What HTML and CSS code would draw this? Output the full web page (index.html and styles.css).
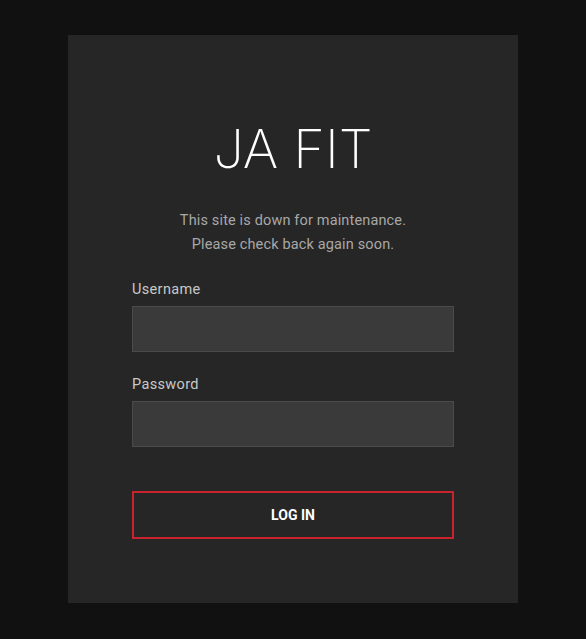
FILE: index.html
```html
<!DOCTYPE html>
<html lang="en">
<head>
    <meta charset="UTF-8">
    <meta name="viewport" content="width=device-width, initial-scale=1.0">
    <title>JA FIT - Maintenance</title>
    <link rel="stylesheet" href="styles.css">
</head>
<body>
    <div class="panel">
        <h1>JA FIT</h1>
        <p class="notice">This site is down for maintenance.<br>Please check back again soon.</p>
        <form id="loginForm">
            <div class="form-group">
                <label for="username">Username</label>
                <input type="text" id="username" name="username">
            </div>
            <div class="form-group">
                <label for="password">Password</label>
                <input type="password" id="password" name="password">
            </div>
            <button type="submit">LOG IN</button>
        </form>
    </div>
</body>
</html>
```

FILE: styles.css
```css
/* Maintenance login page */
body {
    font-family: Roboto, "Liberation Sans", sans-serif;
    margin: 0;
    padding: 35px 0 36px;
    background-color: #111111;
    color: #aaaaaa;
}

.panel {
    width: 450px;
    margin: 0 0 0 68px;
    box-sizing: border-box;
    padding: 74px 64px 64px;
    background-color: #262626;
    min-height: 568px;
}

h1 {
    margin: 0;
    text-align: center;
    font-family: Inter, Roboto, sans-serif;
    font-weight: 200;
    font-size: 54px;
    line-height: 80px;
    color: #ffffff;
}

.notice {
    margin: 20px 0 23px;
    text-align: center;
    font-size: 14.5px;
    line-height: 24px;
    letter-spacing: 0.15px;
    color: #a8a8a8;
}

.form-group {
    margin-bottom: 23px;
}

label {
    display: block;
    margin-bottom: 6px;
    font-size: 14.5px;
    line-height: 20px;
    letter-spacing: 0.35px;
    color: #c8c8c8;
}

input[type="text"],
input[type="password"] {
    display: block;
    width: 100%;
    height: 46px;
    box-sizing: border-box;
    padding: 8px 12px;
    background-color: #3a3a3a;
    border: 1px solid #4b4b4b;
    color: #ffffff;
    font-size: 14px;
    outline: none;
}

button {
    display: block;
    width: 100%;
    height: 48px;
    margin-top: 44px;
    background-color: transparent;
    border: 2px solid #c8222d;
    color: #ffffff;
    font-family: Roboto, sans-serif;
    font-weight: 700;
    font-size: 14px;
    cursor: pointer;
}
```
